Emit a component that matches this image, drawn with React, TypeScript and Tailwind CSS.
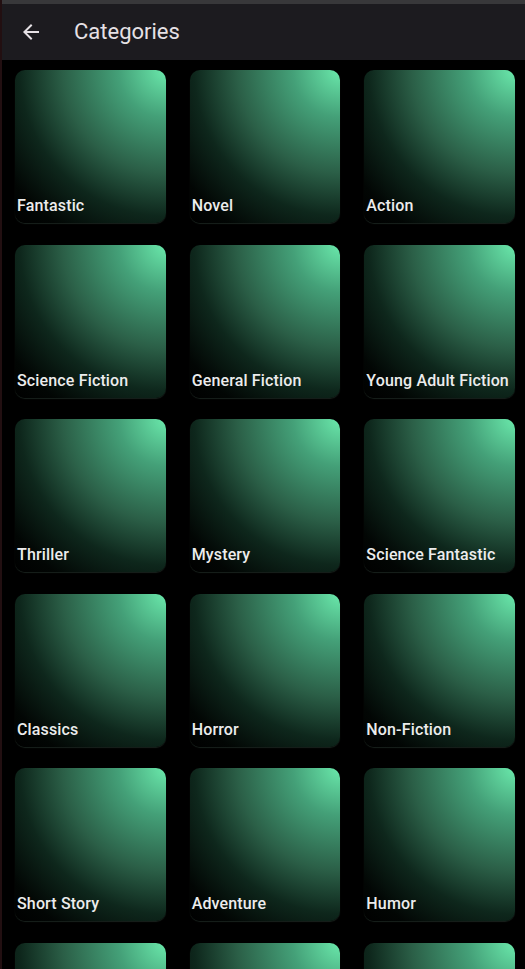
const categories = [
  'Fantastic',
  'Novel',
  'Action',
  'Science Fiction',
  'General Fiction',
  'Young Adult Fiction',
  'Thriller',
  'Mystery',
  'Science Fantastic',
  'Classics',
  'Horror',
  'Non-Fiction',
  'Short Story',
  'Adventure',
  'Humor',
  'Romance',
  'Biography',
  'Poetry',
];

function BackIcon() {
  return (
    <svg width="24" height="24" viewBox="0 0 24 24" className="fill-[#e6e1e5]">
      <path d="M20 11H7.83l5.59-5.59L12 4l-8 8 8 8 1.41-1.41L7.83 13H20v-2z" />
    </svg>
  );
}

function CategoryCard({ name }: { name: string }) {
  return (
    <div className="relative h-[153px] rounded-[10px] overflow-hidden bg-[radial-gradient(circle_at_100%_0%,#6ae8ab_0%,#44a078_22%,#2b5f47_48%,#0e271c_68%,#020604_88%,#000_100%)] shadow-[0_1px_1px_rgba(70,95,80,0.35)]">
      <span className="absolute left-[2px] bottom-[8px] text-[16px] font-medium tracking-[0.15px] leading-[19px] text-[#ececec] whitespace-nowrap">
        {name}
      </span>
    </div>
  );
}

export default function App() {
  return (
    <div className="min-h-screen bg-black border-l-2 border-[#220f11] font-['Roboto',sans-serif]">
      <div className="h-[4px] bg-[#38383a]" />
      <header className="h-[56px] bg-[#1c1b1f] flex items-center">
        <div className="w-[56px] flex justify-center pl-[2px]">
          <BackIcon />
        </div>
        <h1 className="ml-[16px] text-[22px] leading-[28px] text-[#e6e1e5]">Categories</h1>
      </header>
      <div className="grid grid-cols-3 gap-x-[24px] gap-y-[21.6px] pl-[13px] pr-[10px] pt-[10px] pb-4">
        {categories.map((name) => (
          <CategoryCard key={name} name={name} />
        ))}
      </div>
    </div>
  );
}
